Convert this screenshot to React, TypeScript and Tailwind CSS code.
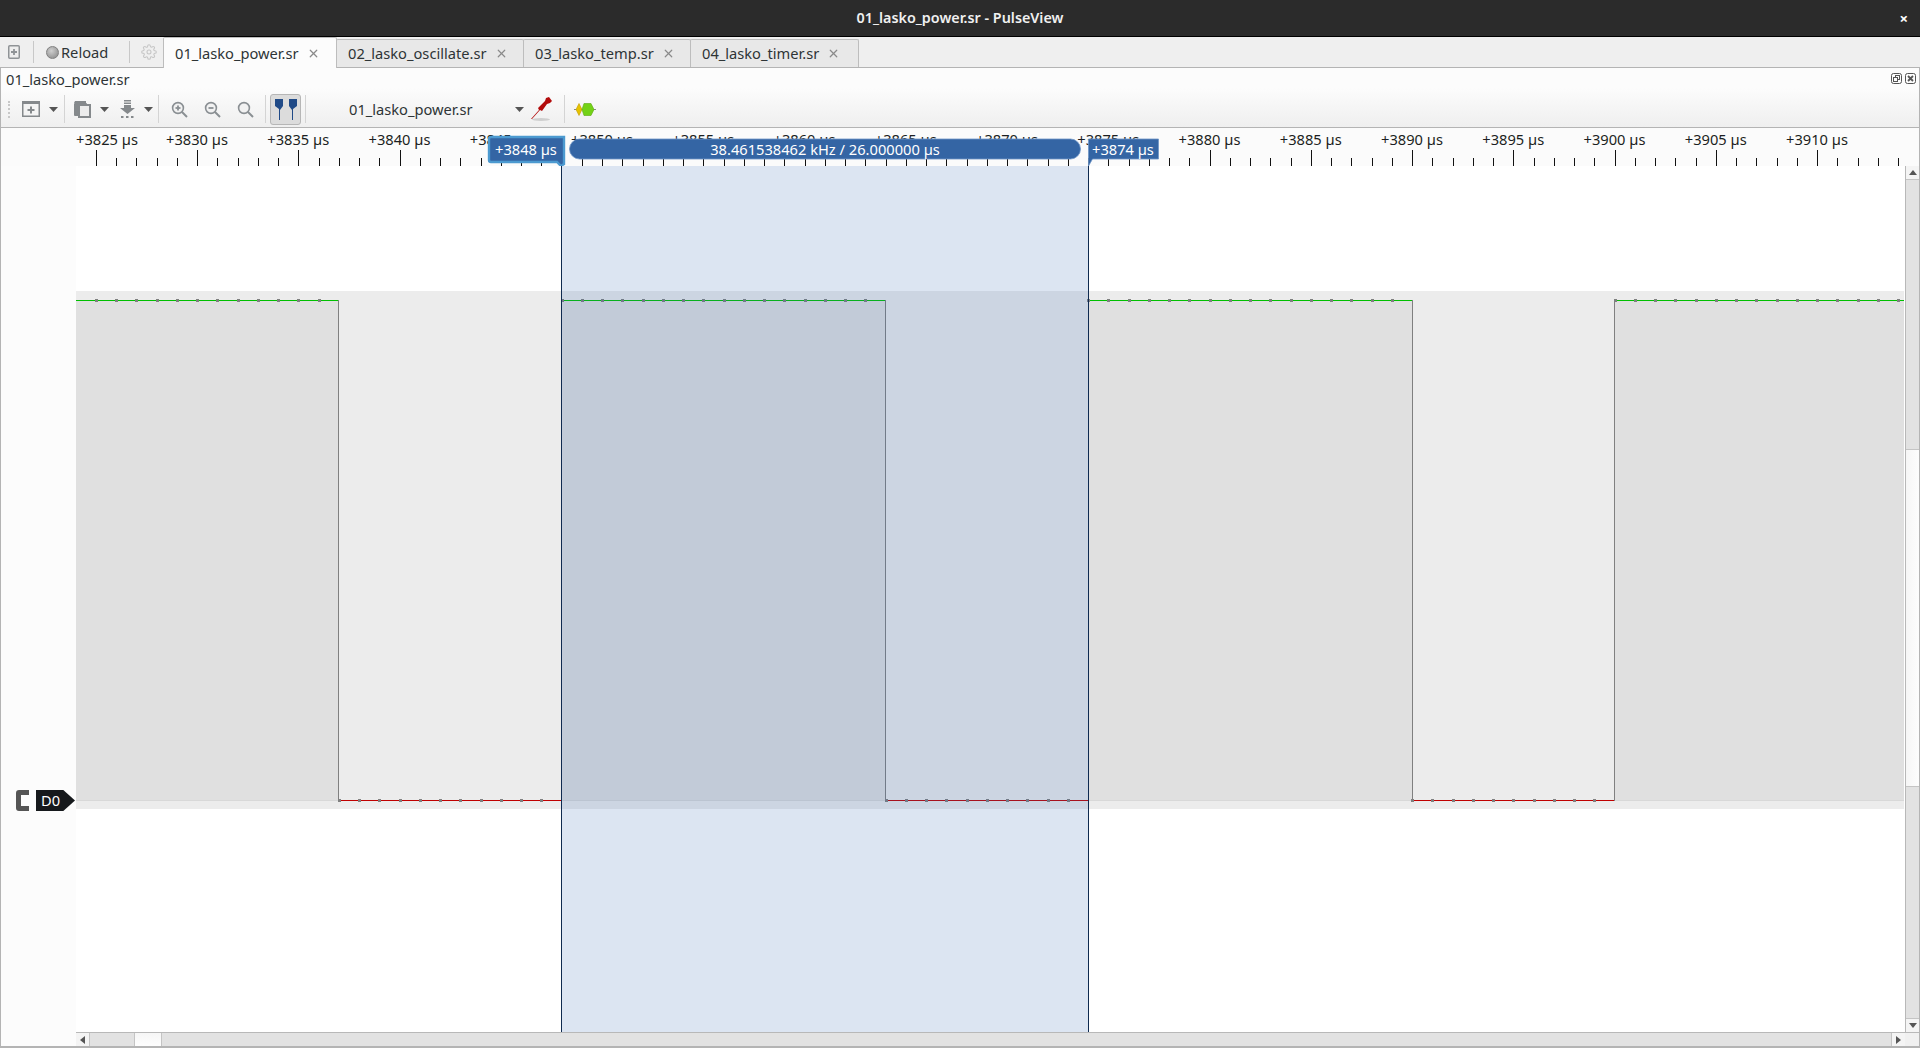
import { X } from 'lucide-react';

const PX_PER_US = 20.25;
const usToX = (us: number) => 561.5 + (us - 3848) * PX_PER_US;

const tabs = [
  { name: '01_lasko_power.sr', w: 'w-[174px]', active: true },
  { name: '02_lasko_oscillate.sr', w: 'w-[188px]', active: false },
  { name: '03_lasko_temp.sr', w: 'w-[168px]', active: false },
  { name: '04_lasko_timer.sr', w: 'w-[169px]', active: false },
];

const ticks = Array.from({ length: 90 }, (_, i) => 3825 + i);
const labels = ticks.filter((t) => t % 5 === 0 && t <= 3910);

// [from, to, isHigh] in page px
const segments: [number, number, boolean][] = [
  [76, 338, true],
  [338, 561, false],
  [561, 885, true],
  [885, 1088, false],
  [1088, 1412, true],
  [1412, 1614, false],
  [1614, 1904, true],
];

function Caret() {
  return <svg width="9" height="5" viewBox="0 0 9 5" className="shrink-0"><path d="M0 0h9L4.5 5z" fill="#555" /></svg>;
}

function Sep({ className }: { className: string }) {
  return <div className={`w-px h-[28px] bg-[#d4d4d4] shrink-0 ${className}`} />;
}

function ZoomIcon({ sign }: { sign?: 'plus' | 'minus' }) {
  return (
    <svg width="17" height="17" viewBox="0 0 17 17" fill="none" stroke="#8a8f93" strokeWidth="1.6" className="shrink-0">
      <circle cx="7" cy="7" r="5.4" fill="#f2f2f2" />
      <path d="M11 11l5 5" strokeWidth="2" />
      {sign && <path d="M4.5 7h5" strokeWidth="1.8" />}
      {sign === 'plus' && <path d="M7 4.5v5" strokeWidth="1.8" />}
    </svg>
  );
}

function Toolbar() {
  return (
    <div className="h-[40px] pt-[3px] flex items-center bg-gradient-to-b from-[#fcfcfc] to-[#efefef] border-b border-[#b4b4b4] shrink-0">
      <div className="ml-[7px] w-[3px] h-[17px] border-l-2 border-dotted border-[#c8c8c8]" />
      <svg width="18" height="16" viewBox="0 0 18 16" className="ml-[11px] shrink-0">
        <rect x="0.75" y="0.75" width="16.5" height="14.5" fill="#f4f4f4" stroke="#85898c" strokeWidth="1.5" />
        <rect x="0" y="0" width="18" height="3" fill="#85898c" />
        <path d="M9 5.5v7M5.5 9h7" stroke="#85898c" strokeWidth="2" />
      </svg>
      <div className="ml-[9px]"><Caret /></div>
      <Sep className="ml-[6px]" />
      <svg width="18" height="18" viewBox="0 0 18 18" className="ml-[9px] shrink-0">
        <path d="M0 3h12V1H1z" fill="#85898c" />
        <rect x="0" y="3" width="13" height="13" rx="1" fill="#85898c" />
        <rect x="4" y="4" width="13" height="14" fill="#85898c" />
        <rect x="6" y="6" width="9" height="10" fill="#ececec" />
      </svg>
      <div className="ml-[8px]"><Caret /></div>
      <svg width="15" height="18" viewBox="0 0 15 18" className="ml-[11px] shrink-0">
        <path d="M4 0h7v1.5H4zM4 2.5h7V4H4zM4 5h7v3h4l-7.5 6L0 8h4z" fill="#85898c" />
        <path d="M1 16h2.5v2H1zM6 16h2.5v2H6zM11 16h2.5v2H11z" fill="#85898c" />
      </svg>
      <div className="ml-[9px]"><Caret /></div>
      <Sep className="ml-[5px]" />
      <div className="ml-[12px]"><ZoomIcon sign="plus" /></div>
      <div className="ml-[16px]"><ZoomIcon sign="minus" /></div>
      <div className="ml-[16px]"><ZoomIcon /></div>
      <Sep className="ml-[11px]" />
      <div className="ml-[4px] w-[31px] h-[31px] rounded-[3px] bg-[#dcdcdc] border border-[#b6b6b6] flex items-center justify-center shrink-0">
        <svg width="22" height="22" viewBox="0 0 22 22">
          <path d="M0 1h8v7L5 12 5 22H4V11L0 8zM22 1h-8v7l3 4v10h1V11l4-3z" fill="#204a87" />
        </svg>
      </div>
      <Sep className="ml-[4px]" />
      <span className="ml-[43px] w-[124px] text-[14.67px] leading-none text-[#2e3436] whitespace-nowrap">01_lasko_power.sr</span>
      <div className="ml-[42px]"><Caret /></div>
      <svg width="22" height="24" viewBox="0 0 22 24" className="ml-[7px] shrink-0">
        <ellipse cx="10" cy="22.5" rx="9" ry="1.4" fill="#cfcfcf" />
        <path d="M0 22l8-9-1-2 7-7 1-3 3-1 3 4-2 2-3 1-5 7-2-1-8 9z" fill="#b30c0c" />
      </svg>
      <Sep className="ml-[11px]" />
      <svg width="22" height="13" viewBox="0 0 22 13" className="ml-[9px] shrink-0">
        <path d="M0 6.5h22" stroke="#8a8a8a" />
        <path d="M5 0.5l3 6-3 6-3-6z" fill="#e6c200" stroke="#c4a000" strokeWidth="0.6" />
        <path d="M10 0.5h7l3 6-3 6h-7l-2-6z" fill="#73d216" stroke="#5ca80f" strokeWidth="0.6" />
      </svg>
    </div>
  );
}

function Ruler() {
  return (
    <div className="relative h-[38px] bg-[#fbfbfb] shrink-0 overflow-hidden">
      {labels.map((t) => (
        <span
          key={t}
          className={`absolute top-[2px] text-[14.67px] leading-[19px] text-[#1c1f22] whitespace-nowrap ${t === 3825 ? 'left-[75px]' : '-translate-x-1/2'}`}
          style={t === 3825 ? undefined : { left: usToX(t) - 1 }}
        >
          +{t} µs
        </span>
      ))}
      <svg className="absolute left-0 top-0" width="1918" height="38" viewBox="1 128 1918 38">
        {ticks.map((t) => {
          const x = Math.round(usToX(t)) + 0.5;
          return <path key={t} d={`M${x} ${t % 5 === 0 ? 150 : 158}V166`} stroke="#111" />;
        })}
        <path d="M1088.5 139h70v20h-66l-4 7z" fill="#3465a4" stroke="#6f95c6" strokeWidth="0.8" />
        <rect x="569.5" y="139" width="511" height="20" rx="10" fill="#3465a4" stroke="#6f95c6" strokeWidth="0.8" />
        <path d="M491 137h73v27l-3 2-4-4h-66a2 2 0 0 1-2-2v-21a2 2 0 0 1 2-2z" fill="#3465a4" stroke="#4c9ad0" strokeWidth="2.4" />
      </svg>
      <span className="absolute left-[494px] top-[11px] text-[14.67px] leading-[20px] text-white whitespace-nowrap">+3848 µs</span>
      <span className="absolute left-[569px] w-[510px] top-[11px] text-center text-[14.67px] leading-[20px] text-white whitespace-nowrap">38.461538462 kHz / 26.000000 µs</span>
      <span className="absolute left-[1091px] top-[11px] text-[14.67px] leading-[20px] text-white whitespace-nowrap">+3874 µs</span>
    </div>
  );
}

function Trace() {
  const dots = ticks.map((t) => Math.round(usToX(t))).filter((x) => x < 1904);
  return (
    <div className="relative flex-1 min-w-0 bg-white overflow-hidden">
      <svg className="block" width="1828" height="866" viewBox="76 166 1828 866">
        <rect x="76" y="291" width="1828" height="518" fill="#ececec" />
        {segments.filter((s) => s[2]).map(([a, b]) => (
          <rect key={a} x={a} y="300" width={b - a} height="500" fill="#e0e0e0" />
        ))}
        <path d="M76 800.5H1904" stroke="#d8d8d8" />
        {segments.map(([a, b, high]) => (
          <path key={a} d={`M${a} ${high ? 300.5 : 800.5}H${b}`} stroke={high ? '#00c000' : '#c00000'} />
        ))}
        {segments.slice(1).map(([a]) => (
          <path key={a} d={`M${a + 0.5} 300V801`} stroke="#808080" />
        ))}
        {dots.map((x) => {
          const high = segments.find(([a, b]) => x >= a && x < b)?.[2];
          return <rect key={x} x={x - 1} y={high ? 299 : 799} width="3" height="3" fill="#808080" />;
        })}
      </svg>
      <div className="absolute left-[485px] w-[528px] top-0 bottom-0 bg-[rgba(45,100,175,0.17)] border-x border-[#0f2a50]" />
    </div>
  );
}

function VScroll() {
  return (
    <div className="w-[14px] flex flex-col bg-[#e2e2e2] border-l border-[#b8b8b8] shrink-0">
      <div className="h-[14px] bg-[#f4f4f4] border-b border-[#c4c4c4] flex items-center justify-center">
        <svg width="8" height="5" viewBox="0 0 8 5"><path d="M4 0l4 5H0z" fill="#555" /></svg>
      </div>
      <div className="h-[269px]" />
      <div className="h-[338px] bg-gradient-to-r from-[#f6f6f6] to-[#fdfdfd] border-y border-[#c4c4c4]" />
      <div className="flex-1" />
      <div className="h-[14px] bg-[#f4f4f4] border-t border-[#c4c4c4] flex items-center justify-center">
        <svg width="8" height="5" viewBox="0 0 8 5"><path d="M0 0h8L4 5z" fill="#555" /></svg>
      </div>
    </div>
  );
}

function HScroll() {
  return (
    <div className="flex-1 flex h-[14px] bg-[#e2e2e2] border-t border-[#b8b8b8]">
      <div className="w-[14px] bg-[#f4f4f4] border-r border-[#c4c4c4] flex items-center justify-center shrink-0">
        <svg width="5" height="8" viewBox="0 0 5 8"><path d="M0 4l5-4v8z" fill="#555" /></svg>
      </div>
      <div className="w-[44px] shrink-0" />
      <div className="w-[28px] bg-gradient-to-b from-[#f6f6f6] to-[#fdfdfd] border-x border-[#c4c4c4] shrink-0" />
      <div className="flex-1" />
      <div className="w-[14px] bg-[#f4f4f4] border-l border-[#c4c4c4] flex items-center justify-center shrink-0">
        <svg width="5" height="8" viewBox="0 0 5 8"><path d="M5 4L0 0v8z" fill="#555" /></svg>
      </div>
      <div className="w-[14px] bg-[#f0f0f0] shrink-0" />
    </div>
  );
}

export default function App() {
  return (
    <div className="w-[1920px] h-[1048px] flex flex-col overflow-hidden bg-[#efefef] font-['Noto_Sans',sans-serif]">
      {/* window title */}
      <div className="relative h-[37px] bg-[#2b2b2b] border-b border-black flex items-center justify-center shrink-0">
        <span className="text-[14.34px] font-semibold text-[#f0f0f0]">01_lasko_power.sr - PulseView</span>
        <span className="absolute right-[12px] top-[9px] text-[15px] leading-[18px] font-bold text-white">×</span>
      </div>

      {/* tab bar */}
      <div className="h-[31px] flex items-stretch border-b border-[#b4b4b4] shrink-0">
        <div className="w-[163px] flex items-center shrink-0">
          <svg width="12" height="14" viewBox="0 0 12 14" className="ml-[8px] shrink-0">
            <rect x="0.75" y="0.75" width="10.5" height="12.5" rx="1" fill="#eee" stroke="#8f9396" strokeWidth="1.5" />
            <path d="M6 4v6M3 7h6" stroke="#8f9396" strokeWidth="1.8" />
          </svg>
          <div className="ml-[13px] w-px h-[22px] bg-[#c8c8c8]" />
          <div className="ml-[12px] w-[13px] h-[13px] rounded-full bg-[radial-gradient(circle_at_40%_35%,#cfcfcf,#858585)] border border-[#808080] shrink-0" />
          <span className="ml-[2px] text-[14.67px] leading-none text-[#2e3436]">Reload</span>
          <div className="ml-[21px] w-px h-[22px] bg-[#c8c8c8]" />
          <svg width="16" height="16" viewBox="0 0 24 24" fill="none" stroke="#c6c6c6" strokeWidth="1.6" className="ml-[11px] shrink-0">
            <circle cx="12" cy="12" r="3" />
            <path d="M19.4 15a1.65 1.65 0 0 0 .33 1.82l.06.06a2 2 0 1 1-2.83 2.83l-.06-.06a1.65 1.65 0 0 0-2.82 1.17V21a2 2 0 0 1-4 0v-.09a1.65 1.65 0 0 0-2.82-1.17l-.06.06a2 2 0 1 1-2.83-2.83l.06-.06A1.65 1.65 0 0 0 3.09 14H3a2 2 0 0 1 0-4h.09a1.65 1.65 0 0 0 1.17-2.82l-.06-.06a2 2 0 1 1 2.83-2.83l.06.06A1.65 1.65 0 0 0 10 3.09V3a2 2 0 0 1 4 0v.09a1.65 1.65 0 0 0 2.82 1.17l.06-.06a2 2 0 1 1 2.83 2.83l-.06.06A1.65 1.65 0 0 0 20.91 10H21a2 2 0 0 1 0 4h-.09a1.65 1.65 0 0 0-1.51 1z" />
          </svg>
        </div>
        {tabs.map((t) => (
          <div
            key={t.name}
            className={`${t.w} flex items-center pl-[11px] rounded-t-[2px] border-x border-t border-[#bdbdbd] -mr-px shrink-0 ${t.active ? 'bg-[#fcfcfc] relative -mb-px' : 'bg-[#e8e8e8] mt-[2px]'}`}
          >
            <span className="text-[14.67px] leading-none text-[#2e3436] whitespace-nowrap">{t.name}</span>
            <X size={13} strokeWidth={2.2} color="#8a8a8a" className="ml-[8px] shrink-0" />
          </div>
        ))}
      </div>

      {/* session window */}
      <div className="flex-1 min-h-0 flex flex-col bg-[#fcfcfc] border-x border-[#b4b4b4]">
        <div className="h-[20px] flex items-center justify-between pl-[5px] pr-[3px] shrink-0">
          <span className="mt-[3px] text-[14.67px] leading-none text-[#2e3436] whitespace-nowrap">01_lasko_power.sr</span>
          <div className="flex gap-[3px]">
            <svg width="11" height="11" viewBox="0 0 11 11" fill="none" stroke="#555">
              <rect x="0.5" y="0.5" width="10" height="10" rx="2" />
              <rect x="4.5" y="2.5" width="4" height="4" />
              <rect x="2.5" y="4.5" width="4" height="4" fill="#fcfcfc" />
            </svg>
            <svg width="11" height="11" viewBox="0 0 11 11" fill="none" stroke="#555">
              <rect x="0.5" y="0.5" width="10" height="10" rx="2" />
              <path d="M3 3l5 5M8 3l-5 5" strokeWidth="1.8" />
            </svg>
          </div>
        </div>
        <Toolbar />
        <Ruler />
        <div className="flex-1 min-h-0 flex relative">
          <div className="w-[75px] shrink-0" />
          <Trace />
          <VScroll />
          {/* channel header */}
          <div className="absolute left-[15px] top-[624px] flex gap-[7px]">
            <svg width="13" height="21" viewBox="0 0 13 21">
              <path d="M13 0H3a3 3 0 0 0-3 3v15a3 3 0 0 0 3 3h10v-5H5V5h8z" fill="#555" />
            </svg>
            <div className="w-[39px] h-[21px] bg-[#16191c] pl-[5px] text-[14.67px] leading-[20px] text-white [clip-path:polygon(0_0,70%_0,100%_50%,70%_100%,0_100%)]">D0</div>
          </div>
        </div>
        <div className="flex shrink-0">
          <div className="w-[75px] shrink-0" />
          <HScroll />
        </div>
      </div>
      <div className="h-[2px] bg-[#b4b4b4] shrink-0" />
    </div>
  );
}
